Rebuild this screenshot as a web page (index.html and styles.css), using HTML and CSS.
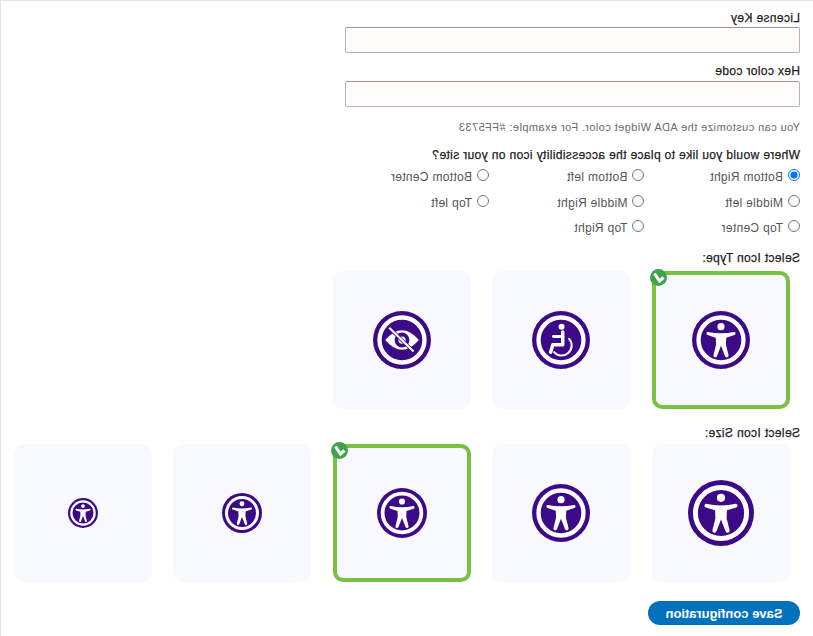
FILE: index.html
```html
<!DOCTYPE html>
<html lang="en">
<head>
    <meta charset="UTF-8">
    <title>ADA Widget settings</title>
    <link rel="stylesheet" href="styles.css">
</head>
<body>
    <svg class="sprites" width="0" height="0">
        <symbol id="icon-body" viewBox="0 0 100 100">
            <circle cx="50" cy="50" r="50" fill="#3c0a87"/>
            <circle cx="50" cy="50" r="38.75" fill="none" stroke="#fff" stroke-width="7.5"/>
            <circle cx="50" cy="27" r="6.2" fill="#fff"/>
            <path d="M25 38.5 Q25 36 27.5 36 Q50 41 72.5 36 Q75 36 75 38.5 Q75 41 73 41.5 L59 46 L58.5 58 L63 76 Q63.5 80 60 80 Q58 80 57 78 L50 60 L43 78 Q42 80 40 80 Q36.5 80 37 76 L41.5 58 L41 46 L27 41.5 Q25 41 25 38.5Z" fill="#fff"/>
        </symbol>
        <symbol id="icon-chair" viewBox="0 0 100 100">
            <circle cx="50" cy="50" r="50" fill="#3c0a87"/>
            <circle cx="50" cy="50" r="38.75" fill="none" stroke="#fff" stroke-width="7.5"/>
            <circle cx="49" cy="27" r="5.2" fill="#fff"/>
            <path d="M47 36 L47 58 L64 58 L68 71" fill="none" stroke="#fff" stroke-width="6" stroke-linejoin="round" stroke-linecap="round"/>
            <path d="M47 44 L63 44" fill="none" stroke="#fff" stroke-width="5" stroke-linecap="round"/>
            <path d="M36 48 A16 16 0 1 0 62 71" fill="none" stroke="#fff" stroke-width="3.5" stroke-linecap="round"/>
        </symbol>
        <symbol id="icon-eye" viewBox="0 0 100 100">
            <circle cx="50" cy="50" r="50" fill="#3c0a87"/>
            <circle cx="50" cy="50" r="38.75" fill="none" stroke="#fff" stroke-width="7.5"/>
            <path d="M21 50 Q50 16 79 50 Q50 84 21 50Z" fill="#fff"/>
            <circle cx="50" cy="50" r="9.5" fill="#fff" stroke="#3c0a87" stroke-width="6.5"/>
            <path d="M71 30 L31 69" stroke="#3c0a87" stroke-width="6"/>
            <path d="M72 29 L30 70" stroke="#fff" stroke-width="3.5"/>
        </symbol>
        <symbol id="icon-check" viewBox="0 0 17 17">
            <circle cx="8.5" cy="8.5" r="8.5" fill="#3fa34d"/>
            <path d="M3.5 8.5 L7.5 12 L12.5 4.5" fill="none" stroke="#fff" stroke-width="3"/>
        </symbol>
    </svg>

    <form class="page">
        <label class="field-label" for="licenseKey">License Key</label>
        <input class="text-field" type="text" id="licenseKey">

        <label class="field-label second" for="hexColor">Hex color code</label>
        <input class="text-field" type="text" id="hexColor">
        <p class="hint">You can customize the ADA Widget color. For example: #FF5733</p>

        <p class="question">Where would you like to place the accessibility icon on your site?</p>
        <div class="radio-grid">
            <label class="radio"><input type="radio" name="place" checked>Bottom Right</label>
            <label class="radio"><input type="radio" name="place">Bottom left</label>
            <label class="radio"><input type="radio" name="place">Bottom Center</label>
            <label class="radio"><input type="radio" name="place">Middle left</label>
            <label class="radio"><input type="radio" name="place">Middle Right</label>
            <label class="radio"><input type="radio" name="place">Top left</label>
            <label class="radio"><input type="radio" name="place">Top Center</label>
            <label class="radio"><input type="radio" name="place">Top Right</label>
        </div>

        <p class="section-title type-title">Select Icon Type:</p>
        <div class="card-row type-row">
            <div class="card selected">
                <svg class="badge"><use href="#icon-check"/></svg>
                <svg class="icon size-58"><use href="#icon-body"/></svg>
            </div>
            <div class="card"><svg class="icon size-58"><use href="#icon-chair"/></svg></div>
            <div class="card"><svg class="icon size-58"><use href="#icon-eye"/></svg></div>
        </div>

        <p class="section-title size-title">Select Icon Size:</p>
        <div class="card-row size-row">
            <div class="card"><svg class="icon size-66"><use href="#icon-body"/></svg></div>
            <div class="card"><svg class="icon size-58"><use href="#icon-body"/></svg></div>
            <div class="card selected">
                <svg class="badge"><use href="#icon-check"/></svg>
                <svg class="icon size-50"><use href="#icon-body"/></svg>
            </div>
            <div class="card"><svg class="icon size-40"><use href="#icon-body"/></svg></div>
            <div class="card"><svg class="icon size-30"><use href="#icon-body"/></svg></div>
        </div>

        <button class="save-btn" type="button">Save configuration</button>
    </form>
</body>
</html>
```

FILE: styles.css
```css
* {
    margin: 0;
    padding: 0;
    box-sizing: border-box;
}

html, body {
    width: 813px;
    height: 636px;
    overflow: hidden;
    background: #fff;
}

.sprites {
    position: absolute;
}

/* the whole screen is flipped left to right */
.page {
    width: 813px;
    height: 636px;
    padding: 10px 0 0 13px;
    transform: scaleX(-1);
    border-top: 1px solid #e4e4e4;
    border-right: 1px solid #e4e4e4;
    font-family: "Liberation Sans", Arial, sans-serif;
    font-size: 12px;
    letter-spacing: 0.3px;
    color: #222;
}

.field-label,
.question,
.section-title {
    display: block;
    height: 14px;
    line-height: 14px;
    letter-spacing: 0.36px;
    color: #1d1d1d;
    -webkit-text-stroke: 0.25px #1d1d1d;
}

.field-label.second {
    margin-top: 11px;
}

.text-field {
    display: block;
    width: 455px;
    height: 26px;
    margin-top: 2px;
    background: #fdfcfb;
    border: 1px solid #b4b4b4;
    border-top-color: #9a9a9a;
    border-radius: 2px;
}

.second + .text-field {
    margin-top: 3px;
}

.hint {
    height: 14px;
    margin-top: 13px;
    line-height: 14px;
    font-size: 11px;
    letter-spacing: 0.43px;
    color: #6a6a6a;
}

.question {
    margin-top: 14px;
}

.radio-grid {
    display: grid;
    grid-template-columns: repeat(3, 155.5px);
    grid-auto-rows: 25.5px;
    margin-top: 6px;
    color: #555;
}

.radio {
    display: flex;
    align-items: center;
    gap: 5px;
    height: 18px;
}

.radio input {
    position: relative;
    top: -2px;
    width: 12px;
    height: 12px;
    margin: 0;
}

.type-title {
    margin-top: 6.5px;
}

.size-title {
    margin-top: 16.5px;
}

.card-row {
    display: flex;
    gap: 21.5px;
    margin-left: 10px;
}

.type-row {
    margin-top: 6px;
}

.size-row {
    margin-top: 4.5px;
}

.card {
    position: relative;
    flex: none;
    display: flex;
    align-items: center;
    justify-content: center;
    width: 138px;
    height: 138px;
    background: #f8f9fe;
    border: 4px solid #f8f9fe;
    border-radius: 10px;
}

.card.selected {
    border-color: #7ac143;
}

.badge {
    position: absolute;
    top: -6.5px;
    right: -5.5px;
    width: 17px;
    height: 17px;
}

.icon { display: block; }
.size-66 { width: 66px; height: 66px; }
.size-58 { width: 58px; height: 58px; }
.size-50 { width: 50px; height: 50px; }
.size-40 { width: 40px; height: 40px; }
.size-30 { width: 30px; height: 30px; }

.save-btn {
    display: block;
    width: 152px;
    height: 24px;
    margin-top: 19px;
    background: #0071bc;
    border: none;
    border-radius: 12px;
    color: #fff;
    font-family: "Liberation Sans", Arial, sans-serif;
    font-size: 13px;
    font-weight: bold;
}
```
